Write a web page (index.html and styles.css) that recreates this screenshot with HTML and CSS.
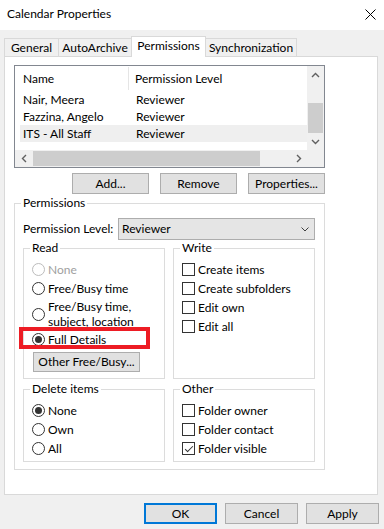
FILE: index.html
```html
<!DOCTYPE html>
<html>
  <head>
    <meta charset="utf-8">
    <link rel="stylesheet" href="styles.css">
  </head>
  <body>
    <div class="titlebar">
      <span class="title">Calendar Properties</span>
      <svg class="close" width="11" height="11" viewBox="0 0 11 11"><path d="M0.5 0.5L10.5 10.5M10.5 0.5L0.5 10.5" stroke="#000" stroke-width="1"/></svg>
    </div>
    <div class="tabs">
      <div class="tab tab-general">General</div>
      <div class="tab tab-archive">AutoArchive</div>
      <div class="tab tab-perm active">Permissions</div>
      <div class="tab tab-sync">Synchronization</div>
    </div>
    <div class="panel">
      <div class="list">
        <div class="list-body">
          <div class="list-head">
            <span class="col-name">Name</span>
            <span class="col-level">Permission Level</span>
          </div>
          <div class="list-row"><span>Nair, Meera</span><span>Reviewer</span></div>
          <div class="list-row"><span>Fazzina, Angelo</span><span>Reviewer</span></div>
          <div class="list-row selected"><span>ITS - All Staff</span><span>Reviewer</span></div>
        </div>
        <div class="vscroll">
          <div class="arrow"><svg width="9" height="6" viewBox="0 0 9 6"><path d="M1 5L4.5 1.5L8 5" fill="none" stroke="#606060" stroke-width="1.4"/></svg></div>
          <div class="track"><div class="thumb"></div></div>
          <div class="arrow"><svg width="9" height="6" viewBox="0 0 9 6"><path d="M1 1L4.5 4.5L8 1" fill="none" stroke="#606060" stroke-width="1.4"/></svg></div>
        </div>
        <div class="hscroll">
          <div class="arrow"><svg width="6" height="9" viewBox="0 0 6 9"><path d="M5 1L1.5 4.5L5 8" fill="none" stroke="#606060" stroke-width="1.4"/></svg></div>
          <div class="track"><div class="thumb"></div></div>
          <div class="arrow"><svg width="6" height="9" viewBox="0 0 6 9"><path d="M1 1L4.5 4.5L1 8" fill="none" stroke="#606060" stroke-width="1.4"/></svg></div>
        </div>
        <div class="corner"></div>
      </div>

      <div class="list-buttons">
        <button type="button" class="btn">Add...</button>
        <button type="button" class="btn">Remove</button>
        <button type="button" class="btn">Properties...</button>
      </div>

      <fieldset class="group group-perm">
        <legend>Permissions</legend>
        <div class="level-row">
          <label for="level">Permission Level:</label>
          <div class="combo" id="level">
            <span>Reviewer</span>
            <svg width="8" height="5" viewBox="0 0 8 5"><path d="M0.5 0.5L4 4L7.5 0.5" fill="none" stroke="#404040" stroke-width="1"/></svg>
          </div>
        </div>
        <div class="subgroups">
          <fieldset class="group sub">
            <legend>Read</legend>
            <label class="opt disabled"><input type="radio" name="read" disabled>None</label>
            <label class="opt"><input type="radio" name="read">Free/Busy time</label>
            <label class="opt opt-wrap"><input type="radio" name="read"><span>Free/Busy time,<br>subject, location</span></label>
            <label class="opt marked"><input type="radio" name="read" checked>Full Details</label>
            <button type="button" class="btn btn-other">Other Free/Busy...</button>
          </fieldset>
          <fieldset class="group sub">
            <legend>Write</legend>
            <label class="opt"><input type="checkbox">Create items</label>
            <label class="opt"><input type="checkbox">Create subfolders</label>
            <label class="opt"><input type="checkbox">Edit own</label>
            <label class="opt"><input type="checkbox">Edit all</label>
          </fieldset>
          <fieldset class="group sub">
            <legend>Delete items</legend>
            <label class="opt"><input type="radio" name="del" checked>None</label>
            <label class="opt"><input type="radio" name="del">Own</label>
            <label class="opt"><input type="radio" name="del">All</label>
          </fieldset>
          <fieldset class="group sub">
            <legend>Other</legend>
            <label class="opt"><input type="checkbox">Folder owner</label>
            <label class="opt"><input type="checkbox">Folder contact</label>
            <label class="opt"><input type="checkbox" checked>Folder visible</label>
          </fieldset>
        </div>
      </fieldset>
    </div>

    <div class="dialog-buttons">
      <button type="button" class="btn btn-dialog default">OK</button>
      <button type="button" class="btn btn-dialog">Cancel</button>
      <button type="button" class="btn btn-dialog">Apply</button>
    </div>
  </body>
</html>
```

FILE: styles.css
```css
:root {
  --face: #f0f0f0;
  --line: #dcdcdc;
  --button: #e1e1e1;
  --button-border: #adadad;
  --mark: #ed1c24;
}
*,*:before,*:after { box-sizing: border-box; }
body {
  margin: 0;
  width: 384px;
  height: 529px;
  overflow: hidden;
  background-color: var(--face);
  font-family: Lato, "Noto Sans", sans-serif;
  font-size: 12px;
  line-height: 16px;
  color: #000;
}

/* window chrome */
.titlebar {
  height: 30px;
  padding: 0 8px 2px 7px;
  background-color: #fff;
  display: flex;
  align-items: center;
  justify-content: space-between;
}

.tabs {
  height: 26px;
  padding-left: 4px;
  display: flex;
  align-items: flex-end;
}
.tab {
  height: 18px;
  line-height: 17px;
  text-align: center;
  border: 1px solid #d9d9d9;
  border-bottom: none;
  border-right: none;
}
.tab-general { width: 54px; }
.tab-archive { width: 73px; }
.tab-perm { width: 75px; }
.tab-sync { width: 91px; border-right: 1px solid #d9d9d9; }
.tab.active {
  height: 21px;
  margin-bottom: -1px;
  border-right: 1px solid #d9d9d9;
  background-color: #fff;
  position: relative;
  z-index: 1;
}
.tab.active + .tab { border-left: none; }

.panel {
  margin: 0 6px 0 4px;
  height: 439px;
  padding: 8px 0 0 9px;
  background-color: #fff;
  border: 1px solid #d9d9d9;
}

/* permission list */
.list {
  width: 311px;
  height: 103px;
  border: 1px solid #828790;
  display: grid;
  grid-template-columns: 1fr 17px;
  grid-template-rows: 1fr 17px;
}
.list-head {
  height: 25px;
  margin-left: 5px;
  padding-left: 3px;
  display: grid;
  grid-template-columns: 106px 1fr;
  align-items: center;
}
.col-name {
  height: 23px;
  line-height: 23px;
  border-right: 1px solid #e5e5e5;
}
.col-level { padding-left: 6px; }
.list-row {
  height: 17px;
  line-height: 17px;
  margin-left: 5px;
  padding-left: 3px;
  display: grid;
  grid-template-columns: 113px 1fr;
}
.list-row.selected { background-color: #efefef; }

.vscroll, .hscroll, .corner { background-color: var(--face); }
.vscroll { display: flex; flex-direction: column; }
.hscroll { display: flex; }
.arrow {
  flex: 0 0 17px;
  display: flex;
  align-items: center;
  justify-content: center;
}
.track { flex: 1; display: flex; }
.vscroll .track { flex-direction: column; }
.vscroll .thumb {
  margin: auto 1px 0;
  height: 30px;
  background-color: #cdcdcd;
}
.hscroll .thumb {
  margin: 1px 0 1px 1px;
  width: 227px;
  background-color: #cdcdcd;
}

.btn {
  height: 21px;
  padding: 0;
  font: inherit;
  color: #000;
  background-color: var(--button);
  border: 1px solid var(--button-border);
}
.list-buttons {
  width: 311px;
  margin-top: 5px;
  display: flex;
  justify-content: flex-end;
  gap: 11px;
}
.list-buttons .btn { width: 77px; }

/* group boxes */
fieldset.group {
  margin: 0;
  min-width: 0;
  border: 1px solid var(--line);
  padding: 0 9px 7px 8px;
}
legend {
  padding: 0 2px;
  margin-left: -2px;
  line-height: 16px;
}
.group-perm {
  width: 311px;
  margin-top: 1px !important;
  padding-top: 7px !important;
}
.level-row {
  height: 22px;
  display: flex;
  align-items: center;
  justify-content: space-between;
}
.combo {
  width: 197px;
  height: 22px;
  padding: 0 5px 0 3px;
  background-color: #e5e5e5;
  border: 1px solid var(--button-border);
  display: flex;
  align-items: center;
  justify-content: space-between;
}
.subgroups {
  display: grid;
  grid-template-columns: 142px 142px;
  column-gap: 8px;
  row-gap: 2px;
}
fieldset.sub { padding: 4px 4px 3px 8px; }

.opt {
  display: flex;
  align-items: center;
  gap: 3px;
  padding: 3px 0;
  line-height: 13px;
}
.opt-wrap {
  padding: 1px 0;
  line-height: 15px;
}
.opt.disabled { color: #a0a0a0; }
.opt.marked { position: relative; }
.opt.marked::after {
  content: "";
  position: absolute;
  left: -13px;
  top: -3px;
  width: 131px;
  height: 22px;
  border: 4px solid var(--mark);
}

input[type="radio"], input[type="checkbox"] {
  appearance: none;
  -webkit-appearance: none;
  margin: 0;
  flex: 0 0 13px;
  width: 13px;
  height: 13px;
  border: 1px solid #333;
  background-color: #fff;
  display: grid;
  place-content: center;
}
input[type="radio"] { border-radius: 50%; }
input[type="radio"]:disabled { border-color: #bcbcbc; }
input[type="radio"]:checked::before {
  content: "";
  width: 7px;
  height: 7px;
  border-radius: 50%;
  background-color: #333;
}
input[type="checkbox"]:checked::before {
  content: "";
  width: 8px;
  height: 4px;
  border-left: 1px solid #333;
  border-bottom: 1px solid #333;
  transform: translateY(-1px) rotate(-45deg);
}

.btn-other {
  width: 107px;
  height: 20px;
  margin: 3px 0 3px 1px;
}

/* dialog buttons */
.dialog-buttons {
  margin-top: 8px;
  padding-right: 5px;
  display: flex;
  justify-content: flex-end;
  gap: 8px;
}
.btn-dialog { width: 73px; }
.btn-dialog.default { border: 2px solid #0078d7; }
```
